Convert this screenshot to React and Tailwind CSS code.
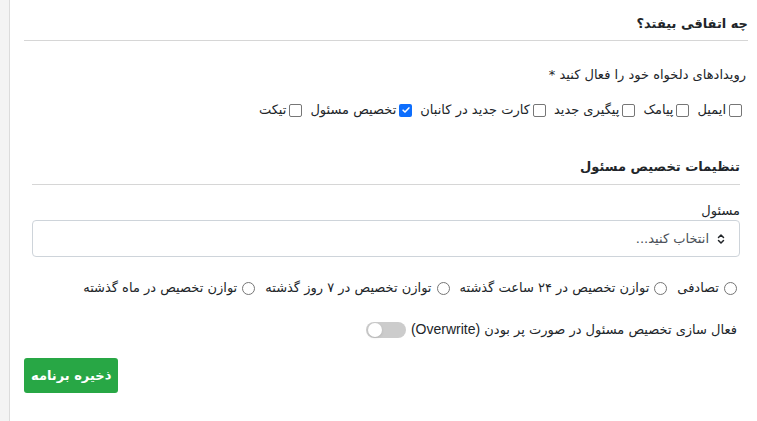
import { ChevronsUpDown } from "lucide-react";

const events = [
  { label: "ایمیل", checked: false },
  { label: "پیامک", checked: false },
  { label: "پیگیری جدید", checked: false },
  { label: "کارت جدید در کانبان", checked: false },
  { label: "تخصیص مسئول", checked: true },
  { label: "تیکت", checked: false },
];

const modes = [
  "تصادفی",
  "توازن تخصیص در ۲۴ ساعت گذشته",
  "توازن تخصیص در ۷ روز گذشته",
  "توازن تخصیص در ماه گذشته",
];

function Checkbox({ checked }) {
  if (checked) {
    return (
      <span className="flex h-[13px] w-[13px] items-center justify-center rounded-[2px] bg-[#0d6efd]">
        <svg viewBox="0 0 12 12" className="h-[10px] w-[10px]">
          <path d="M2.5 6.2l2.3 2.3 4.7-5" fill="none" stroke="white" strokeWidth="1.8" strokeLinecap="round" strokeLinejoin="round" />
        </svg>
      </span>
    );
  }
  return <span className="h-[13px] w-[13px] rounded-[2px] border border-[#767676] bg-white" />;
}

export default function App() {
  return (
    <div className="h-[421px] w-full overflow-hidden bg-[#f4f4f4] pl-[9px] font-['DejaVu_Sans',sans-serif] text-[13px] text-[#212529]">
      <div dir="rtl" className="h-full border-l border-[#dcdcdc] bg-white pr-[9px] pl-[14px] pt-[14px]">
        <h3 className="border-b border-[#d6d6d6] pb-[6px] text-[13px] font-bold leading-[20px]">چه اتفاقی بیفتد؟</h3>

        <div className="mt-[24px] pr-[2px] leading-[20px]">رویدادهای دلخواه خود را فعال کنید *</div>
        <div className="mt-[15px] flex items-center gap-[8px] pr-[6px] leading-[20px]">
          {events.map((e) => (
            <label key={e.label} className="flex items-center gap-[3px]">
              <Checkbox checked={e.checked} />
              <span>{e.label}</span>
            </label>
          ))}
        </div>

        <div className="mx-[8px] mt-[37px]">
          <h4 className="border-b border-[#d6d6d6] pb-[7px] text-[13px] font-bold leading-[20px]">تنظیمات تخصیص مسئول</h4>

          <div className="mt-[17px] leading-[18px]">مسئول</div>
          <div className="flex h-[37px] items-center gap-[6px] rounded-[4px] border border-[#ced4da] px-[12px] text-[#495057]">
            <ChevronsUpDown className="h-[12px] w-[12px] text-[#212529]" strokeWidth={3} />
            <span>انتخاب کنید...</span>
          </div>

          <div className="mt-[21px] flex items-center gap-[10px] pr-[3px] leading-[20px]">
            {modes.map((m) => (
              <label key={m} className="flex items-center gap-[5px]">
                <span className="h-[13px] w-[13px] rounded-full border border-[#767676] bg-white" />
                <span>{m}</span>
              </label>
            ))}
          </div>

          <div className="mt-[21px] flex items-center gap-[5px] pr-[3px] leading-[20px]">
            <span>
              فعال سازی تخصیص مسئول در صورت پر بودن{" "}
              <span className="font-['Liberation_Sans',sans-serif] text-[14px]">(Overwrite)</span>
            </span>
            <span className="flex h-[16px] w-[40px] items-center justify-end rounded-full bg-[#cccccc] px-[2px]">
              <span className="h-[14px] w-[14px] rounded-full bg-white shadow-sm" />
            </span>
          </div>
        </div>

        <div className="mt-[18px] flex justify-end">
          <button className="h-[35px] rounded-[3px] bg-[#28a745] px-[7px] text-[13px] font-bold text-white">ذخیره برنامه</button>
        </div>
      </div>
    </div>
  );
}
